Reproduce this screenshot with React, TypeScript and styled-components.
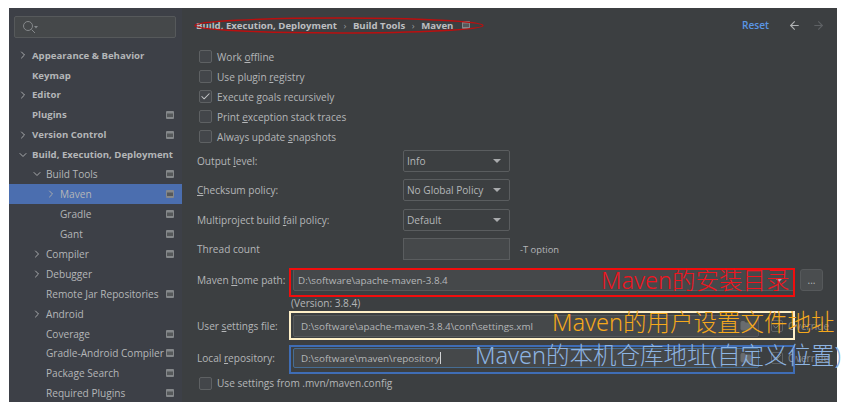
import styled, { createGlobalStyle } from "styled-components";
import { ArrowLeft, ArrowRight, Check, ChevronDown, ChevronRight, Folder } from "lucide-react";

const GlobalStyle = createGlobalStyle`
    html, body {
        margin: 0;
        background: #ffffff;
    }
    body {
        font-family: "Open Sans", "Noto Sans", sans-serif;
        font-size: 10.1px;
        color: #b4b6b8;
    }
`

type TreeItem = {
    label: string;
    level: number;
    bold?: boolean;
    arrow?: "right" | "down";
    config?: boolean;
    selected?: boolean;
}

const treeItems: Array<TreeItem> = [
    { label: "Appearance & Behavior", level: 0, bold: true, arrow: "right" },
    { label: "Keymap", level: 0, bold: true },
    { label: "Editor", level: 0, bold: true, arrow: "right" },
    { label: "Plugins", level: 0, bold: true, config: true },
    { label: "Version Control", level: 0, bold: true, arrow: "right", config: true },
    { label: "Build, Execution, Deployment", level: 0, bold: true, arrow: "down" },
    { label: "Build Tools", level: 1, arrow: "down", config: true },
    { label: "Maven", level: 2, arrow: "right", config: true, selected: true },
    { label: "Gradle", level: 2, config: true },
    { label: "Gant", level: 2, config: true },
    { label: "Compiler", level: 1, arrow: "right", config: true },
    { label: "Debugger", level: 1, arrow: "right" },
    { label: "Remote Jar Repositories", level: 1, config: true },
    { label: "Android", level: 1, arrow: "right" },
    { label: "Coverage", level: 1, config: true },
    { label: "Gradle-Android Compiler", level: 1, config: true },
    { label: "Package Search", level: 1, config: true },
    { label: "Required Plugins", level: 1, config: true },
];

const ConfigIcon = () => (
    <svg width="8" height="8" viewBox="0 0 8 8">
        <rect x="0" y="0" width="8" height="8" rx="1" fill="#85888b" />
        <rect x="1" y="2.5" width="6" height="3.5" fill="#55585a" />
    </svg>
);

const SearchIcon = () => (
    <svg width="16" height="14" viewBox="0 0 16 14" fill="none">
        <circle cx="6" cy="6" r="4.5" stroke="#85888b" strokeWidth="1" />
        <path d="M9.5 9.5 L13 13" stroke="#85888b" strokeWidth="1" />
        <path d="M12 6 h4 l-2 2.4 z" fill="#85888b" />
    </svg>
);

const SelectBox = (props: { value: string }) => (
    <Select>
        <span>{props.value}</span>
        <Caret />
    </Select>
);

const CheckRow = (props: { checked?: boolean; children: React.ReactNode }) => (
    <CheckLine>
        <CheckBox>{props.checked && <Check size={11} strokeWidth={2.2} color="#c4c6c8" />}</CheckBox>
        <span>{props.children}</span>
    </CheckLine>
);

const Override = () => (
    <OverrideWrap>
        <SmallCheck>
            <Check size={10} strokeWidth={2} color="#8a8d90" />
        </SmallCheck>
        <span>Override</span>
    </OverrideWrap>
);

export default function App() {
    return (
        <>
            <GlobalStyle />
            <Page>
                <Window>
                    <Sidebar>
                        <SearchField>
                            <SearchIcon />
                        </SearchField>
                        <Tree>
                            {treeItems.map((item) => (
                                <TreeRow key={item.label} $selected={item.selected} $level={item.level}>
                                    <ArrowSlot>
                                        {item.arrow === "right" && <ChevronRight size={12} color="#a9abad" />}
                                        {item.arrow === "down" && <ChevronDown size={12} color="#a9abad" />}
                                    </ArrowSlot>
                                    <TreeLabel $bold={item.bold}>{item.label}</TreeLabel>
                                    {item.config && <ConfigSlot><ConfigIcon /></ConfigSlot>}
                                </TreeRow>
                            ))}
                        </Tree>
                    </Sidebar>
                    <Content>
                        <Header>
                            <Crumbs>
                                <span>Build, Execution, Deployment</span>
                                <Sep>›</Sep>
                                <span>Build Tools</span>
                                <Sep>›</Sep>
                                <span>Maven</span>
                                <ConfigIcon />
                            </Crumbs>
                            <HeaderActions>
                                <Reset>Reset</Reset>
                                <ArrowLeft size={13} color="#b0b2b4" />
                                <ArrowRight size={13} color="#5e6164" />
                            </HeaderActions>
                        </Header>
                        <Checks>
                            <CheckRow>Work <u>o</u>ffline</CheckRow>
                            <CheckRow>Use plugin <u>r</u>egistry</CheckRow>
                            <CheckRow checked>Execute <u>g</u>oals recursively</CheckRow>
                            <CheckRow>Print <u>e</u>xception stack traces</CheckRow>
                            <CheckRow>Always update <u>s</u>napshots</CheckRow>
                        </Checks>
                        <SelectRows>
                            <SelectRow>
                                <WideLabel>Output <u>l</u>evel:</WideLabel>
                                <SelectBox value="Info" />
                            </SelectRow>
                            <SelectRow>
                                <WideLabel><u>C</u>hecksum policy:</WideLabel>
                                <SelectBox value="No Global Policy" />
                            </SelectRow>
                            <SelectRow>
                                <WideLabel>Multiproject build <u>f</u>ail policy:</WideLabel>
                                <SelectBox value="Default" />
                            </SelectRow>
                            <SelectRow>
                                <WideLabel>Thread count</WideLabel>
                                <ThreadInput />
                                <Hint>-T option</Hint>
                            </SelectRow>
                        </SelectRows>
                        <PathRow $top={9}>
                            <PathLabel>Maven <u>h</u>ome path:</PathLabel>
                            <PathField $grow>
                                D:\software\apache-maven-3.8.4
                                <FieldEnd><Caret /></FieldEnd>
                            </PathField>
                            <BrowseButton>...</BrowseButton>
                        </PathRow>
                        <Version>(Version: 3.8.4)</Version>
                        <PathRow $top={5}>
                            <PathLabel>User <u>s</u>ettings file:</PathLabel>
                            <PathField $inset>
                                D:\software\apache-maven-3.8.4\conf\settings.xml
                                <FieldEnd><Folder size={12} fill="#696c6f" color="#696c6f" /></FieldEnd>
                            </PathField>
                            <Override />
                        </PathRow>
                        <PathRow $top={10}>
                            <PathLabel>Local <u>r</u>epository:</PathLabel>
                            <PathField $inset $focused>
                                D:\software\maven\repository<Cursor />
                                <FieldEnd><Folder size={12} fill="#696c6f" color="#696c6f" /></FieldEnd>
                            </PathField>
                            <Override />
                        </PathRow>
                        <LastCheck>
                            <CheckRow>Use settings from .mvn/maven.config</CheckRow>
                        </LastCheck>

                        <Ellipse viewBox="0 0 290 17" fill="none">
                            <ellipse cx="145" cy="8.5" rx="144" ry="7.5" stroke="#bb0f0f" strokeWidth="1.4" />
                        </Ellipse>
                        <Callout $top={260} $color="#f20d0d" />
                        <Callout $top={303} $color="#fff0c8" />
                        <Callout $top={337} $color="#3f6db5" />
                        <Note $top={257} $left={419} $color="#f0141e">Maven的安装目录</Note>
                        <Note $top={299} $left={370} $color="#f5a81c">Maven的用户设置文件地址</Note>
                        <Note $top={332} $left={293} $color="#8db4e2">Maven的本机仓库地址(自定义位置)</Note>
                    </Content>
                </Window>
            </Page>
        </>
    );
}

const Page = styled.div`
    width: 847px;
    height: 411px;
    padding: 8px 0 0 9px;
    box-sizing: border-box;
    overflow: hidden;
`

const Window = styled.div`
    display: flex;
    width: 828px;
    height: 394px;
`

const Sidebar = styled.div`
    width: 173px;
    flex-shrink: 0;
    background-color: #3d4047;
    padding-top: 8px;
    box-sizing: border-box;
    overflow: hidden;
`

const SearchField = styled.div`
    display: flex;
    align-items: center;
    height: 22px;
    margin: 0 6px 0 5px;
    padding-left: 7px;
    box-sizing: border-box;
    background-color: #45484a;
    border: 1px solid #56595b;
    border-radius: 2px;
`

const Tree = styled.div`
    margin-top: 7.2px;
`

const TreeRow = styled.div<{ $selected?: boolean; $level: number }>`
    display: flex;
    align-items: center;
    height: 19.9px;
    padding-left: ${(props) => 8 + props.$level * 14}px;
    padding-right: 8px;
    background-color: ${(props) => (props.$selected ? "#4b6eaf" : "transparent")};
`

const ArrowSlot = styled.div`
    display: flex;
    align-items: center;
    width: 15px;
    flex-shrink: 0;
`

const TreeLabel = styled.span<{ $bold?: boolean }>`
    font-size: ${(props) => (props.$bold ? "9.6px" : "10.1px")};
    font-weight: ${(props) => (props.$bold ? 700 : 400)};
    white-space: nowrap;
`

const ConfigSlot = styled.div`
    display: flex;
    margin-left: auto;
`

const Content = styled.div`
    position: relative;
    flex: 1;
    min-width: 0;
    background-color: #3c3f41;
    padding: 0 12px 0 15px;
    box-sizing: border-box;
`

const Header = styled.div`
    display: flex;
    align-items: center;
    justify-content: space-between;
    height: 34px;
`

const Crumbs = styled.div`
    display: flex;
    align-items: center;
    gap: 5px;
    margin-left: -1px;
    font-size: 9.6px;
    font-weight: 700;
    color: #bcbec0;

    svg {
        margin-left: 4px;
    }
`

const Sep = styled.span`
    font-weight: 400;
    color: #94979a;
    padding: 0 1.5px;
`

const HeaderActions = styled.div`
    display: flex;
    align-items: center;
    gap: 11px;
`

const Reset = styled.span`
    color: #5a96e6;
    font-weight: 600;
    margin-right: 8px;
`

const Checks = styled.div`
    margin-top: 5px;
`

const CheckLine = styled.div`
    display: flex;
    align-items: center;
    height: 19.9px;
    padding-left: 2px;
`

const CheckBox = styled.div`
    display: flex;
    align-items: center;
    justify-content: center;
    width: 13px;
    height: 13px;
    margin-right: 5px;
    box-sizing: border-box;
    background-color: #43464a;
    border: 1px solid #5e6163;
    border-radius: 2px;
`

const SelectRows = styled.div`
    display: flex;
    flex-direction: column;
    gap: 7.5px;
    margin-top: 3.5px;
`

const SelectRow = styled.div`
    display: flex;
    align-items: center;
    height: 22px;
`

const WideLabel = styled.span`
    width: 206px;
    flex-shrink: 0;
`

const Select = styled.div`
    display: flex;
    align-items: center;
    justify-content: space-between;
    width: 107px;
    height: 22px;
    padding: 0 3px;
    box-sizing: border-box;
    background-color: #3c3f41;
    border: 1px solid #5a5d5f;
    border-radius: 2px;
`

const Caret = styled.span`
    width: 0;
    height: 0;
    margin-right: 5px;
    border-left: 4px solid transparent;
    border-right: 4px solid transparent;
    border-top: 4px solid #a9abad;
`

const ThreadInput = styled.div`
    width: 107px;
    height: 22px;
    box-sizing: border-box;
    background-color: #45484a;
    border: 1px solid #5a5d5f;
`

const Hint = styled.span`
    margin-left: 10px;
    font-size: 9.4px;
`

const PathRow = styled.div<{ $top?: number }>`
    display: flex;
    align-items: center;
    height: 22px;
    margin-top: ${(props) => props.$top ?? 8}px;
`

const PathLabel = styled.span`
    width: 96px;
    flex-shrink: 0;
`

const PathField = styled.div<{ $grow?: boolean; $inset?: boolean; $focused?: boolean }>`
    position: relative;
    display: flex;
    align-items: center;
    flex-shrink: 0;
    width: ${(props) => (props.$grow ? "502px" : "466px")};
    height: ${(props) => (props.$focused ? "20px" : "22px")};
    padding-left: ${(props) => (props.$inset ? "7px" : "4px")};
    box-sizing: border-box;
    font-size: 9.85px;
    background-color: #45484a;
    border: 1px solid ${(props) => (props.$focused ? "#466d94" : "#56595b")};
    border-radius: 2px;
    white-space: nowrap;
`

const FieldEnd = styled.div`
    display: flex;
    align-items: center;
    margin-left: auto;
    margin-right: 6px;
`

const Cursor = styled.span`
    width: 1px;
    height: 12px;
    background-color: #d0d2d4;
`

const BrowseButton = styled.div`
    display: flex;
    align-items: center;
    justify-content: center;
    flex-shrink: 0;
    width: 23px;
    height: 22px;
    margin-left: 5px;
    box-sizing: border-box;
    background-color: #4a4d4f;
    border: 1px solid #56595b;
    border-radius: 3px;
    line-height: 1;
`

const Version = styled.div`
    margin: 5px 0 0 94px;
    height: 14px;
    line-height: 14px;
`

const OverrideWrap = styled.div`
    display: flex;
    align-items: center;
    flex-shrink: 0;
    gap: 5px;
    margin-left: 12px;
    color: #85888b;
`

const SmallCheck = styled.div`
    display: flex;
    align-items: center;
    justify-content: center;
    width: 12px;
    height: 12px;
    box-sizing: border-box;
    border: 1px solid #5e6163;
    border-radius: 2px;
`

const LastCheck = styled.div`
    margin-top: 4px;
`

const Ellipse = styled.svg`
    position: absolute;
    top: 9px;
    left: 12px;
    width: 290px;
    height: 17px;
`

const Callout = styled.div<{ $top: number; $color: string }>`
    position: absolute;
    top: ${(props) => props.$top}px;
    left: 107px;
    width: 506px;
    height: 29px;
    box-sizing: border-box;
    border: 2px solid ${(props) => props.$color};
`

const Note = styled.div<{ $top: number; $left: number; $color: string }>`
    position: absolute;
    top: ${(props) => props.$top}px;
    left: ${(props) => props.$left}px;
    font-family: "Noto Sans", "Noto Sans CJK SC", sans-serif;
    font-size: 23.5px;
    font-weight: 300;
    line-height: 30px;
    white-space: nowrap;
    color: ${(props) => props.$color};
`
